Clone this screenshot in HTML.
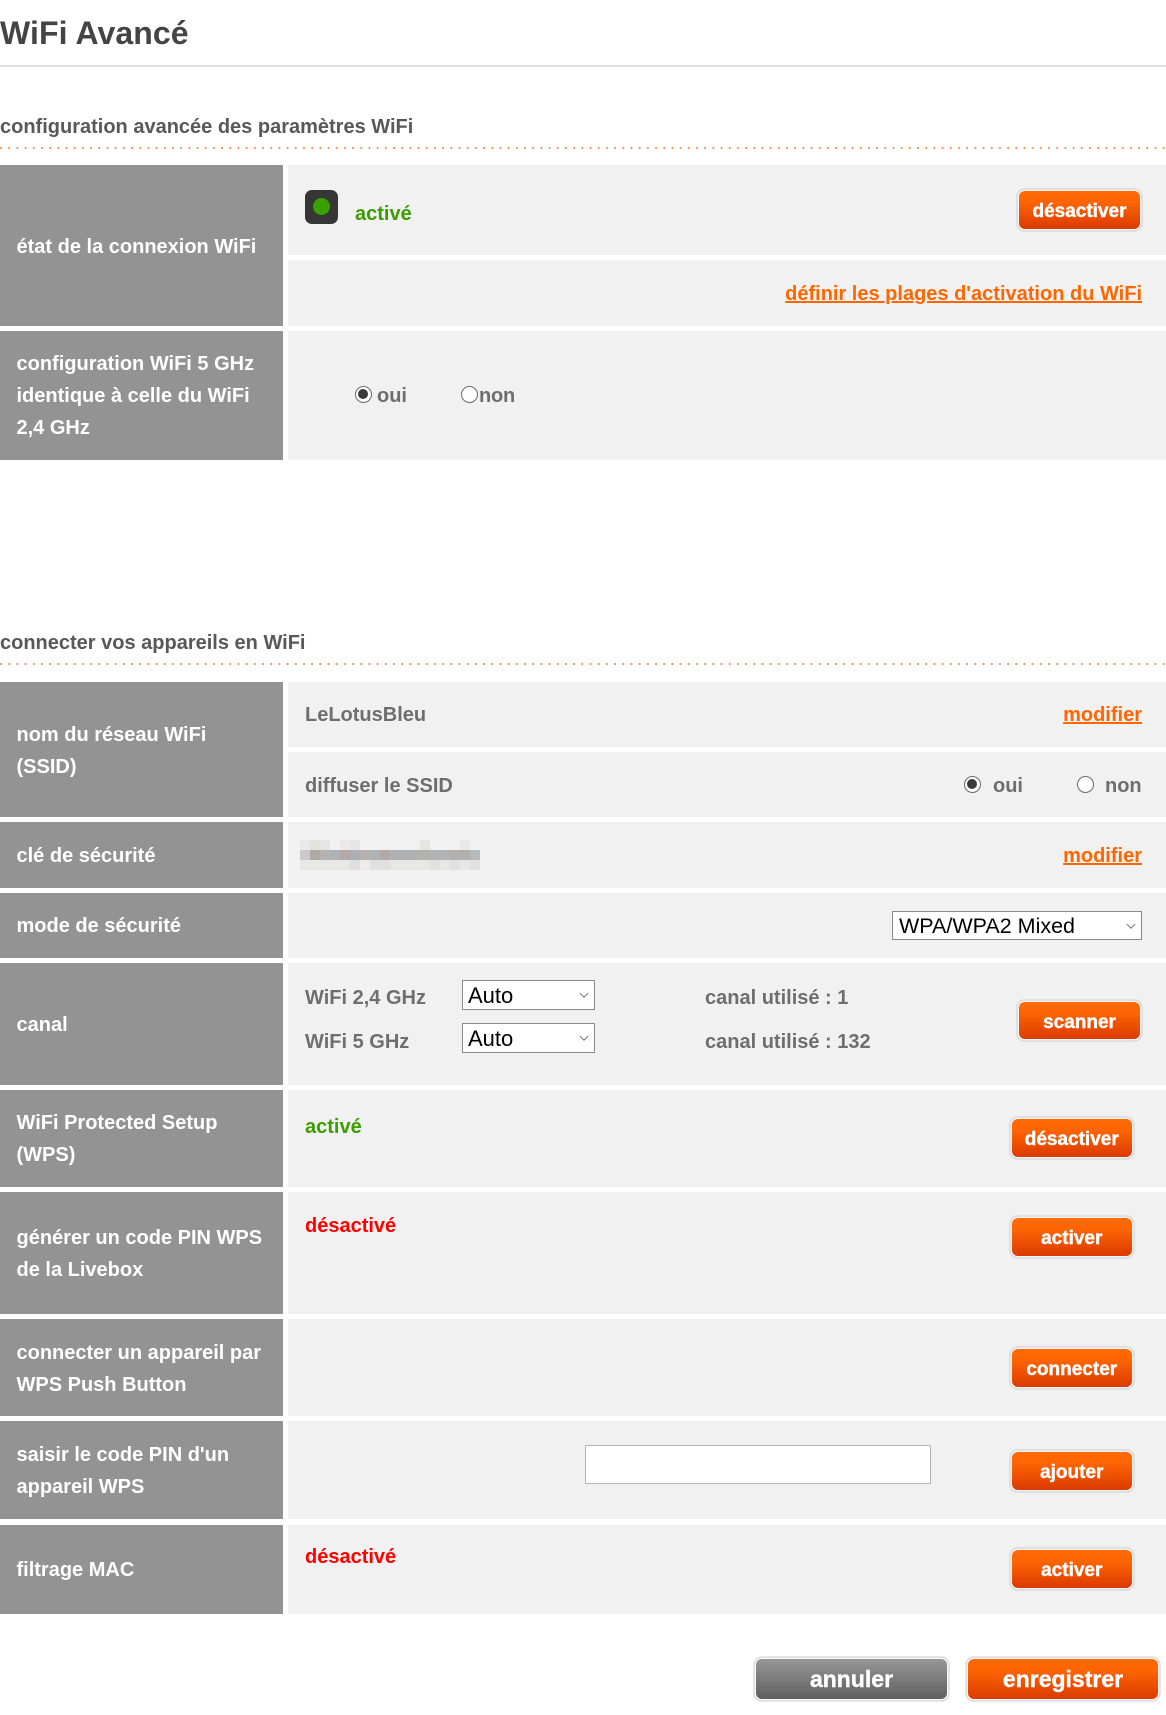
<!DOCTYPE html>
<html lang="fr"><head><meta charset="utf-8"><title>WiFi Avancé</title>
<style>
html,body{margin:0;padding:0;background:#fff}
#p{position:relative;width:1166px;height:1715px;overflow:hidden;font-family:"Liberation Sans",Arial,sans-serif;font-size:20px;font-weight:bold;color:#6e6e6e}
#p div,#p a,#p span.a{position:absolute}
.g{left:0;width:283px;background:#939393}
.c{left:288px;right:0;background:#f1f1f1}
.l{left:16.5px;color:#fff;line-height:32px;white-space:nowrap;margin-top:1px}
.t{line-height:32px;white-space:nowrap;margin-top:1px}
.h{left:0;color:#585858;line-height:32px;white-space:nowrap;margin-top:1px}
.d{left:0;width:1166px;height:2px;background-image:radial-gradient(circle at 1px 1px,#fb8a50 1px,transparent 1.1px);background-size:8.2px 2px}
.b{box-sizing:border-box;border-radius:6px;color:#fff;text-align:center;padding-top:3px;-webkit-text-stroke:.4px #fff;font-family:"Liberation Sans",Arial,sans-serif;background:linear-gradient(#ff6a05,#fd6404 30%,#db3a00);box-shadow:0 0 0 1.5px #f6f6f6,0 0 1px 2.5px #cdcdcd}
.grey{background:linear-gradient(#979797,#5f5f5f)}
.lk{color:#f60;text-decoration:underline;line-height:32px;white-space:nowrap;margin-top:1px}
.r{box-sizing:border-box;width:17px;height:17px;border-radius:50%;border:1.5px solid #6a6a6a;background:#fff}
.r.on::after{content:"";position:absolute;left:2px;top:2px;width:10px;height:10px;border-radius:50%;background:#3a3a3a}
.s{box-sizing:border-box;background:#fff;border:1px solid #8a8a8a;color:#000;font-weight:normal;white-space:nowrap}
.s svg{position:absolute;top:50%;margin-top:-3px}
</style></head><body><div id="p">

<div class="t" style="left:0;top:14px;font-size:32px;line-height:38px;color:#444;margin:0;letter-spacing:.1px">WiFi Avancé</div>
<div style="left:0;top:65px;width:1166px;height:2px;background:#dedede"></div>

<div class="h" style="top:110px">configuration avancée des paramètres WiFi</div>
<div class="d" style="top:147px"></div>

<div class="g" style="top:165px;height:161px"></div>
<div class="l" style="top:230px">état de la connexion WiFi</div>
<div class="c" style="top:165px;height:90px"></div>
<div class="c" style="top:260px;height:66px"></div>
<div style="left:305px;top:190px;width:33px;height:34px;border-radius:7px;background:#363636"></div>
<div style="left:313px;top:198px;width:17px;height:17px;border-radius:50%;background:#3aa000"></div>
<div class="t" style="left:355px;top:197px;color:#3a9e00">activé</div>
<div class="b" style="left:1019px;top:191px;width:121px;height:38px;line-height:36px;font-size:19px">désactiver</div>
<a class="lk" style="right:24px;top:277px">définir les plages d'activation du WiFi</a>

<div class="g" style="top:331px;height:129px"></div>
<div class="c" style="top:331px;height:129px"></div>
<div class="l" style="top:347px">configuration WiFi 5 GHz</div>
<div class="l" style="top:379px">identique à celle du WiFi</div>
<div class="l" style="top:411px">2,4 GHz</div>
<div class="r on" style="left:355px;top:386px"></div>
<div class="t" style="left:377px;top:379px">oui</div>
<div class="r" style="left:461px;top:386px"></div>
<div class="t" style="left:479px;top:379px;letter-spacing:-.2px">non</div>

<div class="h" style="top:626px">connecter vos appareils en WiFi</div>
<div class="d" style="top:663px"></div>

<div class="g" style="top:682px;height:135px"></div>
<div class="l" style="top:718px">nom du réseau WiFi</div>
<div class="l" style="top:750px">(SSID)</div>
<div class="c" style="top:682px;height:65px"></div>
<div class="t" style="left:305px;top:698px">LeLotusBleu</div>
<a class="lk" style="right:24px;top:698px">modifier</a>
<div class="c" style="top:752px;height:65px"></div>
<div class="t" style="left:305px;top:769px">diffuser le SSID</div>
<div class="r on" style="left:964px;top:776px"></div>
<div class="t" style="left:993px;top:769px">oui</div>
<div class="r" style="left:1077px;top:776px"></div>
<div class="t" style="left:1105px;top:769px">non</div>

<div class="g" style="top:822px;height:66px"></div>
<div class="l" style="top:839px">clé de sécurité</div>
<div class="c" style="top:822px;height:66px"></div>
<svg style="position:absolute;left:300px;top:840px" width="180" height="30" shape-rendering="crispEdges">
<g fill="#e9e9e9"><rect width="10" height="10" x="0"/><rect width="10" height="10" x="10" fill="#e3e2dd"/><rect width="10" height="10" x="20" fill="#e5e5e8"/><rect width="10" height="10" x="40" fill="#ebe9e6"/><rect width="10" height="10" x="50" fill="#e5e5ea"/><rect width="10" height="10" x="120" fill="#e5e6e3"/><rect width="10" height="10" x="160"/></g>
<g><rect y="10" width="10" height="10" x="0" fill="#cbc9ce"/><rect y="10" width="10" height="10" x="10" fill="#b0a8a2"/><rect y="10" width="10" height="10" x="20" fill="#b5b3b0"/><rect y="10" width="10" height="10" x="30" fill="#acb2b5"/><rect y="10" width="10" height="10" x="40" fill="#b4a9a6"/><rect y="10" width="10" height="10" x="50" fill="#aeaeb8"/><rect y="10" width="10" height="10" x="60" fill="#b8b0ac"/><rect y="10" width="10" height="10" x="70" fill="#b0b2ba"/><rect y="10" width="10" height="10" x="80" fill="#b4a8a4"/><rect y="10" width="40" height="10" x="90" fill="#b0b1b2"/><rect y="10" width="10" height="10" x="120" fill="#b2b3ac"/><rect y="10" width="30" height="10" x="130" fill="#b1b3b4"/><rect y="10" width="10" height="10" x="150" fill="#b4aeac"/><rect y="10" width="10" height="10" x="160" fill="#b1b0ac"/><rect y="10" width="10" height="10" x="170" fill="#b5babd"/></g>
<g fill="#e6e6e6"><rect y="20" width="180" height="10" x="0" fill="#e7e7e6"/><rect y="20" width="10" height="10" x="50" fill="#dedee0"/><rect y="20" width="10" height="10" x="60" fill="#eeeceb"/><rect y="20" width="20" height="10" x="70" fill="#e0e0e1"/><rect y="20" width="10" height="10" x="130" fill="#e0e0e1"/><rect y="20" width="10" height="10" x="150" fill="#e1e1e1"/><rect y="20" width="10" height="10" x="170" fill="#e1e1e1"/></g>
</svg>
<a class="lk" style="right:24px;top:839px">modifier</a>

<div class="g" style="top:893px;height:65px"></div>
<div class="l" style="top:909px">mode de sécurité</div>
<div class="c" style="top:893px;height:65px"></div>
<div class="s" style="left:892px;top:911px;width:250px;height:29px;font-size:21.5px;line-height:29px;padding-left:6px">WPA/WPA2 Mixed<svg style="right:5px" width="10" height="7"><path d="M.8 1L5 5.2L9.2 1" fill="none" stroke="#808080" stroke-width="1.1"/></svg></div>

<div class="g" style="top:963px;height:122px"></div>
<div class="l" style="top:1008px">canal</div>
<div class="c" style="top:963px;height:122px"></div>
<div class="t" style="left:305px;top:981px">WiFi 2,4 GHz</div>
<div class="t" style="left:305px;top:1025px">WiFi 5 GHz</div>
<div class="s" style="left:462px;top:980px;width:133px;height:30px;font-size:22px;line-height:29px;padding-left:5px">Auto<svg style="right:5px" width="10" height="7"><path d="M.8 1L5 5.2L9.2 1" fill="none" stroke="#808080" stroke-width="1.1"/></svg></div>
<div class="s" style="left:462px;top:1023px;width:133px;height:30px;font-size:22px;line-height:30px;padding-left:5px">Auto<svg style="right:5px" width="10" height="7"><path d="M.8 1L5 5.2L9.2 1" fill="none" stroke="#808080" stroke-width="1.1"/></svg></div>
<div class="t" style="left:705px;top:981px">canal utilisé : 1</div>
<div class="t" style="left:705px;top:1025px">canal utilisé : 132</div>
<div class="b" style="left:1019px;top:1002px;width:121px;height:37px;line-height:35px;font-size:19px">scanner</div>

<div class="g" style="top:1090px;height:97px"></div>
<div class="l" style="top:1106px">WiFi Protected Setup</div>
<div class="l" style="top:1138px">(WPS)</div>
<div class="c" style="top:1090px;height:97px"></div>
<div class="t" style="left:305px;top:1110px;color:#3a9e00">activé</div>
<div class="b" style="left:1011.5px;top:1119px;width:120.5px;height:38px;line-height:36px;font-size:19px">désactiver</div>

<div class="g" style="top:1192px;height:122px"></div>
<div class="l" style="top:1221px">générer un code PIN WPS</div>
<div class="l" style="top:1253px">de la Livebox</div>
<div class="c" style="top:1192px;height:122px"></div>
<div class="t" style="left:305px;top:1209px;color:#f00">désactivé</div>
<div class="b" style="left:1011.5px;top:1218px;width:120.5px;height:38px;line-height:36px;font-size:19px">activer</div>

<div class="g" style="top:1319px;height:97px"></div>
<div class="l" style="top:1336px">connecter un appareil par</div>
<div class="l" style="top:1368px">WPS Push Button</div>
<div class="c" style="top:1319px;height:97px"></div>
<div class="b" style="left:1011.5px;top:1349px;width:120.5px;height:38px;line-height:36px;font-size:19px">connecter</div>

<div class="g" style="top:1421px;height:98px"></div>
<div class="l" style="top:1438px">saisir le code PIN d'un</div>
<div class="l" style="top:1470px">appareil WPS</div>
<div class="c" style="top:1421px;height:98px"></div>
<div style="left:585px;top:1445px;width:344px;height:37px;background:#fff;border:1px solid #b5b5b5"></div>
<div class="b" style="left:1011.5px;top:1452px;width:120.5px;height:38px;line-height:36px;font-size:19px">ajouter</div>

<div class="g" style="top:1525px;height:89px"></div>
<div class="l" style="top:1553px">filtrage MAC</div>
<div class="c" style="top:1525px;height:89px"></div>
<div class="t" style="left:305px;top:1540px;color:#f00">désactivé</div>
<div class="b" style="left:1011.5px;top:1550px;width:120.5px;height:38px;line-height:36px;font-size:19px">activer</div>

<div class="b grey" style="left:756px;top:1659px;width:191px;height:40px;line-height:38px;font-size:23px;padding-top:1px">annuler</div>
<div class="b" style="left:968px;top:1659px;width:190px;height:40px;line-height:38px;font-size:23px;padding-top:1px">enregistrer</div>

</div></body></html>
